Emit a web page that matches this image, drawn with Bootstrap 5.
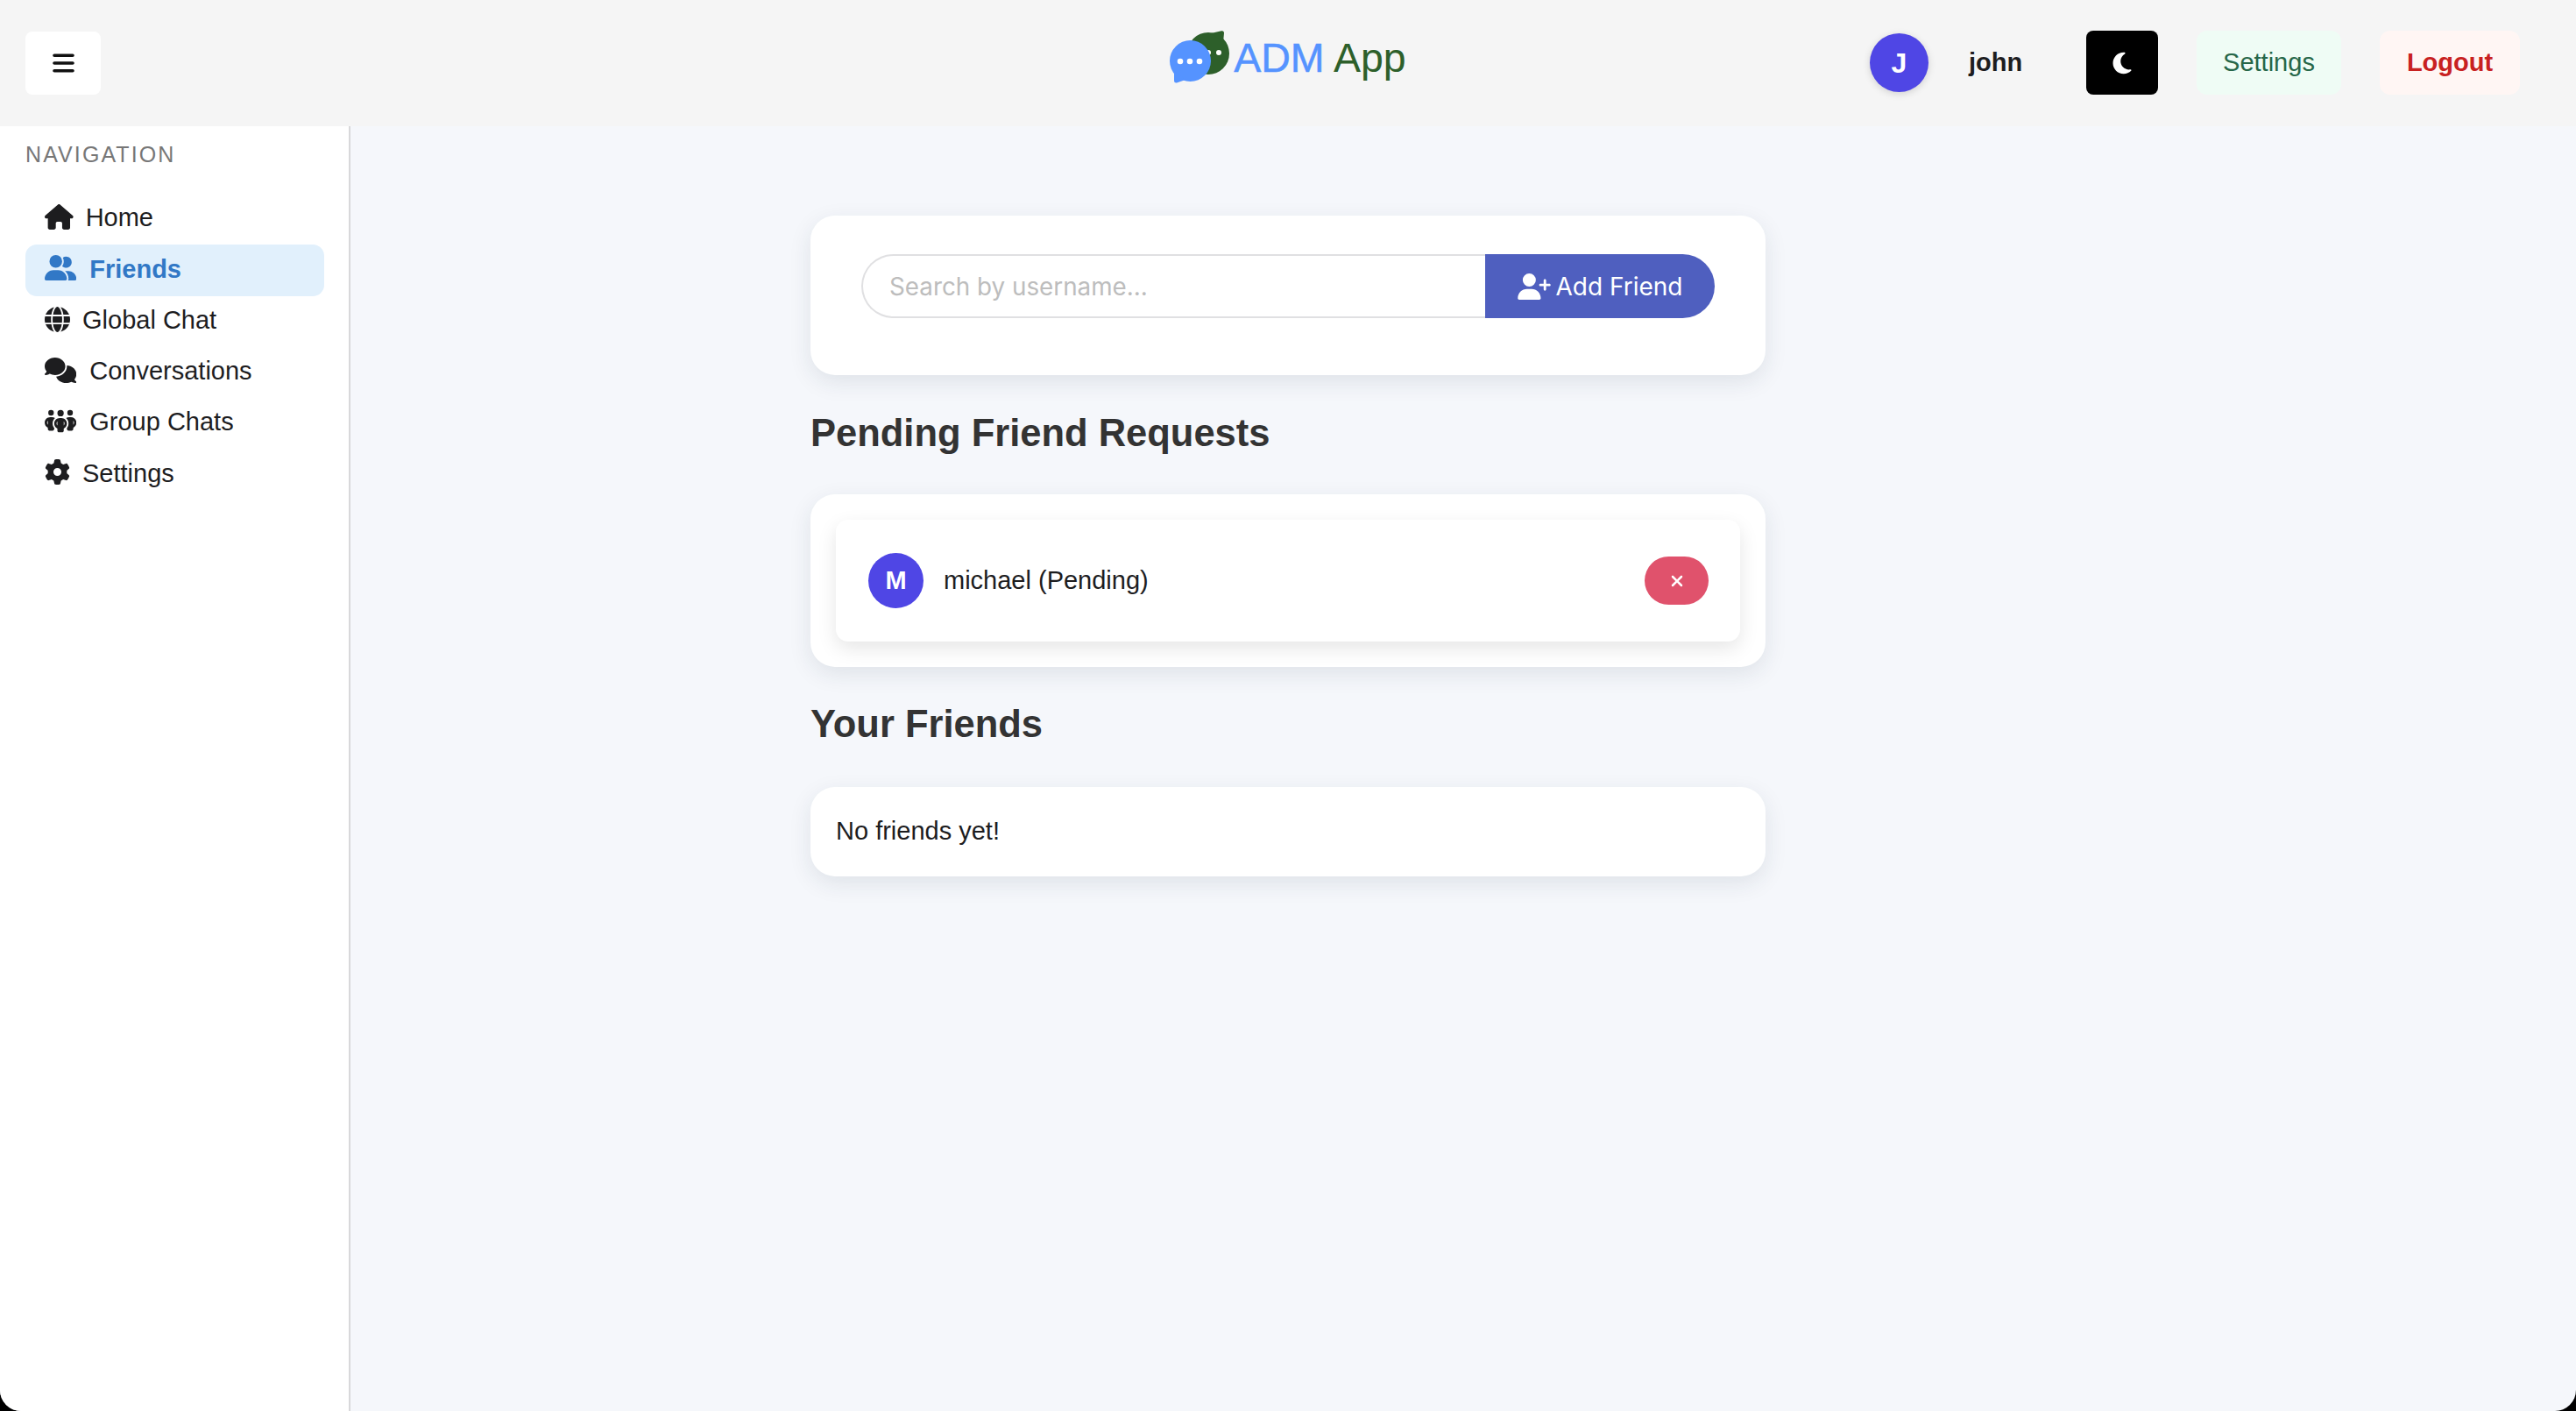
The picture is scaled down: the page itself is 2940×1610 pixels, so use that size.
<!DOCTYPE html>
<html lang="en">
<head>
<meta charset="utf-8">
<title>ADM App</title>
<link href="https://cdn.jsdelivr.net/npm/bootstrap@5.3.0/dist/css/bootstrap.min.css" rel="stylesheet">
<style>
html,body{height:100%;background:#000;}
body{font-family:"Liberation Sans",Arial,sans-serif;color:#1d1d1f;overflow:hidden;}
.app-shell{height:1610px;background:#f5f7fb;border-radius:0 0 24px 24px;overflow:hidden;}
.top-bar{height:144px;background:#f5f5f5;padding:0 29px;display:grid;grid-template-columns:1fr auto 1fr;align-items:start;}
.menu-btn{width:86px;height:72px;margin-top:36px;background:#fff;border:0;border-radius:8px;}
.menu-btn svg{width:25px;height:28px;fill:#111;}
.brand-wrap{margin-top:35px;gap:5px;font-size:46.5px;line-height:59px;}
.brand-wrap svg{width:68px;height:60px;}
.brand-name{padding-top:2px;}
.brand-adm{color:#5593ff;-webkit-text-stroke:.5px #5593ff;}
.brand-app{color:#2d5f2a;}
.top-right{margin-top:35px;margin-right:35px;}
.user-dot{width:67px;height:67px;border-radius:50%;background:#4f46e5;color:#fff;font-weight:700;font-size:32px;box-shadow:0 2px 8px rgba(0,0,0,.15);margin-right:46px;}
.user-name{font-weight:700;font-size:29px;width:134px;}
.moon-btn{width:82px;height:73px;background:#000;border:0;border-radius:8px;margin-right:44px;}
.moon-btn svg{width:24px;height:28px;fill:#fff;}
.top-link{height:73px;border-radius:12px;font-size:29px;}
.top-set{width:165px;background:#effcf5;color:#276749;margin-right:44px;}
.top-out{width:160px;background:#fff6f4;color:#c82121;font-weight:700;}
.side-panel{width:400px;flex:none;height:1466px;background:#fff;border-right:2px solid #d8d8da;padding:17px 28px 0 29px;}
.side-title{font-size:25px;line-height:30px;letter-spacing:2.1px;color:#777;margin-bottom:30px;}
.side-link{height:58.25px;border-radius:13px;padding:0 0 2px 22px;font-size:29px;color:#1d1d1f;text-decoration:none;}
.side-link svg{height:29px;fill:#1d1d1f;flex:none;margin-bottom:3px;}
.side-link.is-on{background:#e1f0fc;color:#3178c6;font-weight:700;}
.side-link.is-on svg{fill:#3178c6;}
.gap-a{margin-right:14px;}
.gap-b{margin-right:15px;}
.main-pane{padding:102px 0 0 525px;}
.col-fixed{width:1090px;}
.panel-white{background:#fff;border-radius:28px;box-shadow:0 8px 26px rgba(30,50,70,.1);}
.search-panel{padding:44px 58px 65px;}
.search-input{flex:1;height:73px;border:2px solid #e0e0e2;border-right:0;border-radius:37px 0 0 37px;padding:0 30px;font:27.8px Inter,"Liberation Sans",sans-serif;outline:0;}
.search-input::placeholder{color:#bdbdbd;}
.add-btn{width:262px;height:73px;background:#4f5fbf;color:#fff;border:0;border-radius:0 37px 37px 0;font:28px Inter,"Liberation Sans",sans-serif;gap:6px;}
.add-btn svg{width:38px;height:30px;fill:#fff;}
.sect-head{font-size:43.5px;font-weight:700;line-height:54px;color:#333;margin:0;}
.sect-one{margin:39px 0 43px;}
.sect-two{margin:38px 0 45px;}
.req-panel{padding:29px;}
.req-row{height:139px;background:#fff;border-radius:14px;box-shadow:0 8px 22px rgba(0,0,0,.1);padding:0 36px 0 37px;font-size:29px;}
.req-dot{width:63px;height:63px;border-radius:50%;background:#4f46e5;color:#fff;font-weight:700;margin-right:23px;}
.del-btn{width:73px;height:55px;border:0;border-radius:28px;background:#e0526c;}
.del-btn svg{width:16px;height:20px;fill:#fff;}
.none-panel{height:102px;padding-left:29px;font-size:29px;}
</style>
</head>
<body>
<div class="app-shell">
  <header class="top-bar">
    <div><button class="menu-btn d-flex align-items-center justify-content-center" aria-label="Menu"><svg viewBox="0 0 448 512"><path d="M0 96C0 78.3 14.3 64 32 64H416c17.7 0 32 14.3 32 32s-14.3 32-32 32H32C14.3 128 0 113.7 0 96zM0 256c0-17.7 14.3-32 32-32H416c17.7 0 32 14.3 32 32s-14.3 32-32 32H32c-17.7 0-32-14.3-32-32zM448 416c0 17.7-14.3 32-32 32H32c-17.7 0-32-14.3-32-32s14.3-32 32-32H416c17.7 0 32 14.3 32 32z"/></svg></button></div>
    <div class="brand-wrap d-flex align-items-start">
      <svg viewBox="0 0 68 60">
        <circle cx="44" cy="26" r="24" fill="#2d5f2a"/>
        <path fill="#2d5f2a" d="M47 3L59 0.2Q62 -0.3 62 3L61 13Z"/>
        <circle cx="44" cy="25" r="3" fill="#fff"/><circle cx="56" cy="25" r="3" fill="#fff"/>
        <circle cx="23.5" cy="34.5" r="23.5" fill="#5593ff"/>
        <path fill="#5593ff" d="M5 46L5 57Q5 60 8 59.5L18 56Z"/>
        <circle cx="12" cy="35" r="3.3" fill="#fff"/><circle cx="23" cy="35" r="3.3" fill="#fff"/><circle cx="34" cy="35" r="3.3" fill="#fff"/>
      </svg>
      <div class="brand-name"><span class="brand-adm">ADM</span> <span class="brand-app">App</span></div>
    </div>
    <div class="top-right d-flex align-items-center justify-content-end">
      <div class="user-dot d-flex align-items-center justify-content-center">J</div>
      <div class="user-name">john</div>
      <button class="moon-btn d-flex align-items-center justify-content-center" aria-label="Theme"><svg viewBox="0 0 384 512"><path d="M223.5 32C100 32 0 132.3 0 256S100 480 223.5 480c60.6 0 115.5-24.2 155.8-63.4c5-4.9 6.3-12.5 3.1-18.7s-10.1-9.7-17-8.5c-9.8 1.7-19.8 2.6-30.1 2.6c-96.9 0-175.5-78.8-175.5-176c0-65.8 36-123.1 89.3-153.3c6.1-3.5 9.2-10.5 7.7-17.3s-7.3-11.9-14.3-12.5c-6.3-.5-12.6-.8-19-.8z"/></svg></button>
      <div class="top-link top-set d-flex align-items-center justify-content-center">Settings</div>
      <div class="top-link top-out d-flex align-items-center justify-content-center">Logout</div>
    </div>
  </header>
  <div class="d-flex">
    <nav class="side-panel">
      <div class="side-title">NAVIGATION</div>
      <a class="side-link d-flex align-items-center" href="#"><svg class="gap-a" viewBox="0 0 576 512"><path d="M575.8 255.5c0 18-15 32.1-32 32.1h-32l.7 160.2c0 2.7-.2 5.4-.5 8.1V472c0 22.1-17.9 40-40 40H456c-1.1 0-2.2 0-3.3-.1c-1.4 .1-2.8 .1-4.2 .1H416 392c-22.1 0-40-17.9-40-40V448 384c0-17.7-14.3-32-32-32H256c-17.7 0-32 14.3-32 32v64 24c0 22.1-17.9 40-40 40H160 128.1c-1.5 0-3-.1-4.5-.2c-1.2 .1-2.4 .2-3.6 .2H104c-22.1 0-40-17.9-40-40V360c0-.9 0-1.9 .1-2.8V287.6H32c-18 0-32-14-32-32.1c0-9 3-17 10-24L266.4 8c7-7 15-8 22-8s15 2 21 7L564.8 231.5c8 7 12 15 11 24z"/></svg>Home</a>
      <a class="side-link is-on d-flex align-items-center" href="#"><svg class="gap-b" viewBox="0 0 640 512"><path d="M96 128a128 128 0 1 1 256 0A128 128 0 1 1 96 128zM0 482.3C0 383.8 79.8 304 178.3 304h91.4C368.2 304 448 383.8 448 482.3c0 16.4-13.3 29.7-29.7 29.7H29.7C13.3 512 0 498.7 0 482.3zM609.3 512H471.4c5.4-9.4 8.6-20.3 8.6-32v-8c0-60.7-27.1-115.2-69.8-151.8c2.4-.1 4.7-.2 7.1-.2h61.4C567.8 320 640 392.2 640 481.3c0 17-13.8 30.7-30.7 30.7zM432 256c-31 0-59-12.6-79.3-32.9C372.4 196.5 384 163.6 384 128c0-26.8-6.6-52.1-18.3-74.3C384.3 40.1 407.2 32 432 32c61.9 0 112 50.1 112 112s-50.1 112-112 112z"/></svg>Friends</a>
      <a class="side-link d-flex align-items-center" href="#"><svg class="gap-a" viewBox="0 0 512 512"><path d="M352 256c0 22.2-1.2 43.6-3.3 64H163.3c-2.2-20.4-3.3-41.8-3.3-64s1.2-43.6 3.3-64H348.7c2.2 20.4 3.3 41.8 3.3 64zm28.8-64H503.9c5.3 20.5 8.1 41.9 8.1 64s-2.8 43.5-8.1 64H380.8c2.1-20.6 3.2-42 3.2-64s-1.1-43.4-3.2-64zm112.6-32H376.7c-10-63.9-29.8-117.4-55.3-151.6c78.3 20.7 142 77.5 171.9 151.6zm-149.1 0H167.7c6.1-36.4 15.5-68.6 27-94.7c10.5-23.6 22.2-40.7 33.5-51.5C239.4 3.2 248.7 0 256 0s16.6 3.2 27.8 13.8c11.3 10.8 23 27.9 33.5 51.5c11.6 26 20.9 58.2 27 94.7zm-209 0H18.6C48.6 85.9 112.2 29.1 190.6 8.4C165.1 42.6 145.3 96.1 135.3 160zM8.1 192H131.2c-2.1 20.6-3.2 42-3.2 64s1.1 43.4 3.2 64H8.1C2.8 299.5 0 278.1 0 256s2.8-43.5 8.1-64zM194.7 446.6c-11.6-26-20.9-58.2-27-94.6H344.3c-6.1 36.4-15.5 68.6-27 94.6c-10.5 23.6-22.2 40.7-33.5 51.5C272.6 508.8 263.3 512 256 512s-16.6-3.2-27.8-13.8c-11.3-10.8-23-27.9-33.5-51.5zM135.3 352c10 63.9 29.8 117.4 55.3 151.6C112.2 482.9 48.6 426.1 18.6 352H135.3zm358.1 0c-30 74.1-93.6 130.9-171.9 151.6c25.5-34.2 45.2-87.7 55.3-151.6H493.4z"/></svg>Global Chat</a>
      <a class="side-link d-flex align-items-center" href="#"><svg class="gap-b" viewBox="0 0 640 512"><path d="M208 352c114.9 0 208-78.8 208-176S322.9 0 208 0S0 78.8 0 176c0 38.6 14.7 74.3 39.6 103.4c-3.5 9.4-8.7 17.7-14.2 24.7c-4.8 6.2-9.7 11-13.3 14.3c-1.8 1.6-3.3 2.9-4.3 3.7c-.5 .4-.9 .7-1.1 .8l-.2 .2 0 0 0 0C1 327.2-1.4 334.4 .8 340.9S9.1 352 16 352c21.8 0 43.8-5.6 62.1-12.5c9.2-3.5 17.8-7.4 25.3-11.4C134.1 343.3 169.8 352 208 352zM448 176c0 112.3-99.1 196.9-216.5 207C255.8 457.4 336.4 512 432 512c38.2 0 73.9-8.7 104.7-23.9c7.5 4 16 7.9 25.2 11.4c18.3 6.9 40.3 12.5 62.1 12.5c6.9 0 13.1-4.5 15.2-11.1c2.1-6.6-.2-13.8-5.8-17.9l0 0 0 0-.2-.2c-.2-.2-.6-.4-1.1-.8c-1-.8-2.5-2-4.3-3.7c-3.6-3.3-8.5-8.1-13.3-14.3c-5.5-7-10.7-15.4-14.2-24.7c24.9-29 39.6-64.7 39.6-103.4c0-92.8-84.9-168.9-192.6-175.5c.4 5.1 .6 10.3 .6 15.5z"/></svg>Conversations</a>
      <a class="side-link d-flex align-items-center" href="#"><svg class="gap-b" viewBox="0 0 640 512"><path d="M72 88a56 56 0 1 1 112 0A56 56 0 1 1 72 88zM64 245.7C54 256.9 48 271.8 48 288s6 31.1 16 42.3V245.7zm144.4-49.3C178.7 222.7 160 261.2 160 304c0 34.3 12 65.8 32 90.5V416c0 17.7-14.3 32-32 32H96c-17.7 0-32-14.3-32-32V389.2C26.2 371.2 0 332.7 0 288c0-61.9 50.1-112 112-112h32c24 0 46.2 7.5 64.4 20.3zM448 416V394.5c20-24.7 32-56.2 32-90.5c0-42.8-18.7-81.3-48.4-107.7C449.8 183.5 472 176 496 176h32c61.9 0 112 50.1 112 112c0 44.7-26.2 83.2-64 101.2V416c0 17.7-14.3 32-32 32H480c-17.7 0-32-14.3-32-32zm8-328a56 56 0 1 1 112 0A56 56 0 1 1 456 88zM576 245.7v84.7c10-11.3 16-26.1 16-42.3s-6-31.1-16-42.3zM320 32a64 64 0 1 1 0 128 64 64 0 1 1 0-128zM240 304c0 16.2 6 31 16 42.3V261.7c-10 11.3-16 26.1-16 42.3zm144-42.3v84.7c10-11.3 16-26.1 16-42.3s-6-31.1-16-42.3zM448 304c0 44.7-26.2 83.2-64 101.2V448c0 17.7-14.3 32-32 32H288c-17.7 0-32-14.3-32-32V405.2c-37.8-18-64-56.5-64-101.2c0-61.9 50.1-112 112-112h32c61.9 0 112 50.1 112 112z"/></svg>Group Chats</a>
      <a class="side-link d-flex align-items-center" href="#"><svg class="gap-a" viewBox="0 0 512 512"><path d="M495.9 166.6c3.2 8.7 .5 18.4-6.4 24.6l-43.3 39.4c1.1 8.3 1.7 16.8 1.7 25.4s-.6 17.1-1.7 25.4l43.3 39.4c6.9 6.2 9.6 15.9 6.4 24.6c-4.4 11.9-9.7 23.3-15.8 34.3l-4.7 8.1c-6.6 11-14 21.4-22.1 31.2c-5.9 7.2-15.7 9.6-24.5 6.8l-55.7-17.7c-13.4 10.3-28.2 18.9-44 25.4l-12.5 57.1c-2 9.1-9 16.3-18.2 17.8c-13.8 2.3-28 3.5-42.5 3.5s-28.7-1.2-42.5-3.5c-9.2-1.5-16.2-8.7-18.2-17.8l-12.5-57.1c-15.8-6.5-30.6-15.1-44-25.4L83.1 425.9c-8.8 2.8-18.6 .3-24.5-6.8c-8.1-9.8-15.5-20.2-22.1-31.2l-4.7-8.1c-6.1-11-11.4-22.4-15.8-34.3c-3.2-8.7-.5-18.4 6.4-24.6l43.3-39.4C64.6 273.1 64 264.6 64 256s.6-17.1 1.7-25.4L22.4 191.2c-6.9-6.2-9.6-15.9-6.4-24.6c4.4-11.9 9.7-23.3 15.8-34.3l4.7-8.1c6.6-11 14-21.4 22.1-31.2c5.9-7.2 15.7-9.6 24.5-6.8l55.7 17.7c13.4-10.3 28.2-18.9 44-25.4l12.5-57.1c2-9.1 9-16.3 18.2-17.8C227.3 1.2 241.5 0 256 0s28.7 1.2 42.5 3.5c9.2 1.5 16.2 8.7 18.2 17.8l12.5 57.1c15.8 6.5 30.6 15.1 44 25.4l55.7-17.7c8.8-2.8 18.6-.3 24.5 6.8c8.1 9.8 15.5 20.2 22.1 31.2l4.7 8.1c6.1 11 11.4 22.4 15.8 34.3zM256 336a80 80 0 1 0 0-160 80 80 0 1 0 0 160z"/></svg>Settings</a>
    </nav>
    <main class="main-pane">
      <div class="col-fixed">
        <section class="panel-white search-panel d-flex">
          <input class="search-input" type="text" placeholder="Search by username...">
          <button class="add-btn d-flex align-items-center justify-content-center"><svg viewBox="0 0 640 512"><path d="M96 128a128 128 0 1 1 256 0A128 128 0 1 1 96 128zM0 482.3C0 383.8 79.8 304 178.3 304h91.4C368.2 304 448 383.8 448 482.3c0 16.4-13.3 29.7-29.7 29.7H29.7C13.3 512 0 498.7 0 482.3zM504 312V248H440c-13.3 0-24-10.7-24-24s10.7-24 24-24h64V136c0-13.3 10.7-24 24-24s24 10.7 24 24v64h64c13.3 0 24 10.7 24 24s-10.7 24-24 24H552v64c0 13.3-10.7 24-24 24s-24-10.7-24-24z"/></svg>Add Friend</button>
        </section>
        <h2 class="sect-head sect-one">Pending Friend Requests</h2>
        <section class="panel-white req-panel">
          <div class="req-row d-flex align-items-center">
            <div class="req-dot d-flex align-items-center justify-content-center">M</div>
            <div class="flex-grow-1">michael (Pending)</div>
            <button class="del-btn d-flex align-items-center justify-content-center" aria-label="Remove"><svg viewBox="0 0 384 512"><path d="M342.6 150.6c12.5-12.5 12.5-32.8 0-45.3s-32.8-12.5-45.3 0L192 210.7 86.6 105.4c-12.5-12.5-32.8-12.5-45.3 0s-12.5 32.8 0 45.3L146.7 256 41.4 361.4c-12.5 12.5-12.5 32.8 0 45.3s32.8 12.5 45.3 0L192 301.3 297.4 406.6c12.5 12.5 32.8 12.5 45.3 0s12.5-32.8 0-45.3L237.3 256 342.6 150.6z"/></svg></button>
          </div>
        </section>
        <h2 class="sect-head sect-two">Your Friends</h2>
        <section class="panel-white none-panel d-flex align-items-center">No friends yet!</section>
      </div>
    </main>
  </div>
</div>
<script src="https://cdn.jsdelivr.net/npm/bootstrap@5.3.0/dist/js/bootstrap.bundle.min.js"></script>
</body>
</html>
